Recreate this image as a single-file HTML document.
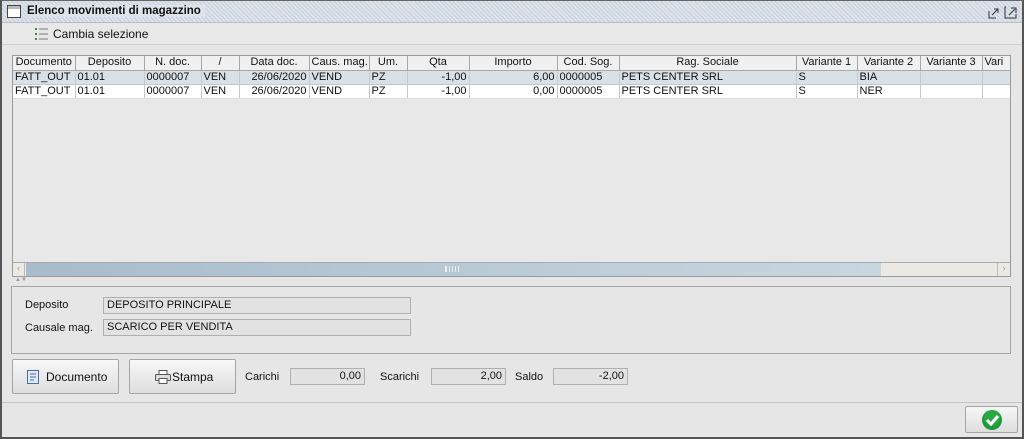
<!DOCTYPE html>
<html><head><meta charset="utf-8"><style>
*{box-sizing:border-box;margin:0;padding:0}
body{width:1024px;height:439px;overflow:hidden;background:#e6e6e6;font-family:"Liberation Sans",Arial,sans-serif;font-size:11px;color:#111;position:relative}
.frame{position:absolute;left:0;top:0;width:1024px;height:439px;border:2px solid #555;border-top:1px solid #666}
.title{position:absolute;left:2px;top:1px;width:1020px;height:22px;background:#dde3ea;background-image:repeating-linear-gradient(45deg,rgba(160,175,195,.35) 0 1px,transparent 1px 3px);border-bottom:1px solid #b8bec6}
.title span{position:absolute;left:25px;top:4px;font-weight:bold;font-size:11.5px;background:#dde3ea;padding-right:4px}
.tb{position:absolute;left:2px;top:23px;width:1020px;height:22px;background:#e8e8e8;border-bottom:1px solid #d0d0d0}
.abs{position:absolute}
table{border-collapse:collapse;table-layout:fixed}
td{height:14px;border-right:1px solid #c8c8c8;padding:0 2px;white-space:nowrap;overflow:hidden;font-size:11px;line-height:13px}
.hd td{background:#f0f0f0;border-right:1px solid #a8a8a8;border-bottom:1px solid #a8a8a8;text-align:center}
.r1 td{background:#d8e0e8;border-bottom:1px solid #c0c8d0}
.r2 td{background:#fff;border-bottom:1px solid #ddd}
.rt{text-align:right}
.fld{position:absolute;height:17px;border:1px solid #b0b0b0;background:#e2e2e2;font-size:11px;line-height:15px;padding:0 3px}
.btn{position:absolute;border:1px solid #a5a5a5;border-radius:2px;background:linear-gradient(#f7f7f7,#dedede);font-size:12px}
</style></head><body>
<div class="frame"></div>
<div class="title">
<svg class="abs" style="left:5px;top:4px" width="14" height="13"><rect x=".5" y=".5" width="13" height="12" fill="#fff" stroke="#444"/><rect x="1" y="1" width="12" height="3" fill="#bbb"/></svg>
<span>Elenco movimenti di magazzino</span>
<svg class="abs" style="left:986px;top:4px" width="32" height="14"><path d="M1 6v7h7M4 10l6-6M6 4h4v4" fill="none" stroke="#333"/><path d="M18 2h-1v11h11V9M21 10l6-6M23 3h5v5" fill="none" stroke="#333"/></svg>
</div>
<div class="tb">
<svg class="abs" style="left:33px;top:5px" width="14" height="12"><g fill="#3a8a3a"><rect x="0" y="0" width="2" height="2"/><rect x="0" y="5" width="2" height="2"/><rect x="0" y="10" width="2" height="2"/></g><g stroke="#777"><path d="M4 1h9M4 6h9M4 11h9"/></g></svg>
<div class="abs" style="left:51px;top:4px;font-size:12px">Cambia selezione</div>
</div>
<div class="abs" style="left:12px;top:55px;width:999px;height:222px;border:1px solid #9a9a9a;background:#e8e8e8;overflow:hidden">
<table style="width:1000px">
<colgroup><col style="width:62px"><col style="width:69px"><col style="width:57px"><col style="width:38px"><col style="width:70px"><col style="width:60px"><col style="width:38px"><col style="width:62px"><col style="width:88px"><col style="width:62px"><col style="width:177px"><col style="width:61px"><col style="width:63px"><col style="width:62px"><col style="width:91px"></colgroup>
<tr class="hd"><td>Documento</td><td>Deposito</td><td>N. doc.</td><td>/</td><td>Data doc.</td><td>Caus. mag.</td><td>Um.</td><td>Qta</td><td>Importo</td><td>Cod. Sog.</td><td>Rag. Sociale</td><td>Variante 1</td><td>Variante 2</td><td>Variante 3</td><td style="text-align:left">Vari</td></tr>
<tr class="r1"><td>FATT_OUT</td><td>01.01</td><td>0000007</td><td>VEN</td><td class="rt">26/06/2020</td><td>VEND</td><td>PZ</td><td class="rt">-1,00</td><td class="rt">6,00</td><td>0000005</td><td>PETS CENTER SRL</td><td>S</td><td>BIA</td><td></td><td></td></tr>
<tr class="r2"><td>FATT_OUT</td><td>01.01</td><td>0000007</td><td>VEN</td><td class="rt">26/06/2020</td><td>VEND</td><td>PZ</td><td class="rt">-1,00</td><td class="rt">0,00</td><td>0000005</td><td>PETS CENTER SRL</td><td>S</td><td>NER</td><td></td><td></td></tr>
</table>
<div class="abs" style="left:0;top:206px;width:997px;height:14px;background:#ece9e4;border-top:1px solid #aaa">
<div class="abs" style="left:0;top:0;width:12px;height:13px;border-right:1px solid #bbb;color:#999;font-size:9px;text-align:center">&lsaquo;</div>
<div class="abs" style="left:13px;top:0;width:855px;height:13px;background:linear-gradient(90deg,#a8bccc,#c8d6e0);"></div>
<div class="abs" style="left:432px;top:3px;width:14px;height:6px;border-left:1px solid #eee;background:repeating-linear-gradient(90deg,#eee 0 1px,transparent 1px 3px)"></div>
<div class="abs" style="left:984px;top:0;width:13px;height:13px;border-left:1px solid #bbb;color:#999;font-size:9px;text-align:center">&rsaquo;</div>
</div>
</div>
<div class="abs" style="left:15px;top:277px;color:#999;font-size:6px">▲▼</div>
<div class="abs" style="left:11px;top:286px;width:1000px;height:68px;border:1px solid #a5a5a5"></div>
<div class="abs" style="left:25px;top:299px">Deposito</div>
<div class="fld" style="left:103px;top:297px;width:308px">DEPOSITO PRINCIPALE</div>
<div class="abs" style="left:25px;top:322px">Causale mag.</div>
<div class="fld" style="left:103px;top:319px;width:308px">SCARICO PER VENDITA</div>
<div class="btn" style="left:12px;top:359px;width:107px;height:35px">
<svg class="abs" style="left:14px;top:10px" width="12" height="14"><rect x=".5" y=".5" width="11" height="13" fill="#dfe8f5" stroke="#4a6fa5"/><path d="M3 4h6M3 7h6M3 10h4" stroke="#4a6fa5"/></svg>
<span class="abs" style="left:33px;top:10px">Documento</span></div>
<div class="btn" style="left:129px;top:359px;width:107px;height:35px">
<svg class="abs" style="left:25px;top:10px" width="16" height="14"><rect x="4" y=".5" width="8" height="4" fill="#fff" stroke="#555"/><rect x=".5" y="4.5" width="15" height="6" rx="1" fill="#ddd" stroke="#555"/><rect x="4" y="8.5" width="8" height="5" fill="#fff" stroke="#555"/></svg>
<span class="abs" style="left:42px;top:10px">Stampa</span></div>
<div class="abs" style="left:245px;top:371px">Carichi</div>
<div class="fld" style="left:290px;top:368px;width:75px;text-align:right">0,00</div>
<div class="abs" style="left:380px;top:371px">Scarichi</div>
<div class="fld" style="left:431px;top:368px;width:75px;text-align:right">2,00</div>
<div class="abs" style="left:515px;top:371px">Saldo</div>
<div class="fld" style="left:553px;top:368px;width:75px;text-align:right">-2,00</div>
<div class="abs" style="left:2px;top:402px;width:1020px;height:1px;background:#c4c4c4"></div>
<div class="btn" style="left:965px;top:406px;width:53px;height:27px">
<svg class="abs" style="left:15px;top:2px" width="22" height="22"><circle cx="11" cy="11" r="10" fill="#1f9a3a"/><circle cx="11" cy="9" r="8" fill="#2fb34a" opacity=".6"/><path d="M6 11l4 4 7-8" fill="none" stroke="#fff" stroke-width="3"/></svg>
</div>
</body></html>
